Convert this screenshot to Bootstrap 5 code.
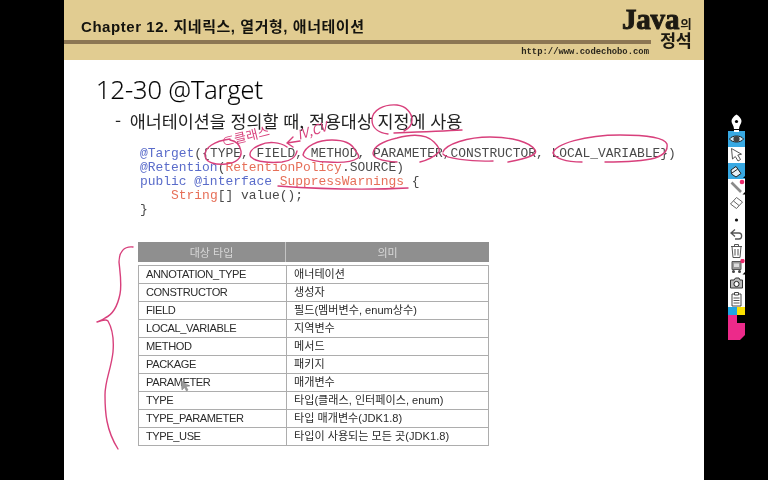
<!DOCTYPE html>
<html lang="ko">
<head>
<meta charset="utf-8">
<title>Chapter 12</title>
<link href="https://cdn.jsdelivr.net/npm/bootstrap@5.3.0/dist/css/bootstrap.min.css" rel="stylesheet">
<style>
html,body{margin:0;height:480px;overflow:hidden;background:#000}
.stage{height:480px;width:768px;background:#000}
.sheet{width:640px;height:480px;margin-left:64px;background:#fff;position:relative;flex:none;font-family:"Noto Sans CJK KR","Noto Sans",sans-serif;color:#1c1c1c;filter:blur(.35px)}
.headband{height:60px;background:#e1cc91}
.headleft{width:587px}
.chap{height:40px;padding-left:17px;padding-bottom:6px;font:700 15px/1 "Liberation Sans","Noto Sans CJK KR",sans-serif;letter-spacing:.55px;color:#14130e}
.rule{height:4px;background:#8c7653}
.site{font:700 8.9px/1 "Liberation Mono",monospace;color:#2a261c;padding-top:4px;padding-right:2px}
.logo{width:42px;color:#1d1a12;line-height:1}
.logojava{margin-left:-29px;margin-top:9px;white-space:nowrap;height:21px}
.javaword{font:700 29px/21px "Liberation Serif",serif;-webkit-text-stroke:1px #1d1a12;letter-spacing:-.2px}
.ui{font:700 12.5px/1 "Noto Sans CJK KR",sans-serif;margin-left:1px}
.jung{font:700 17.5px/1 "Noto Sans CJK KR",sans-serif;margin-top:1px;margin-left:9px;letter-spacing:-.3px;white-space:nowrap}
.heading{font:300 25.3px/34px "Open Sans","Noto Sans",sans-serif;margin:12px 0 0 32px;color:#000;-webkit-text-stroke:.2px #000}
.sub{font:400 17.4px/24px "Noto Sans CJK KR",sans-serif;margin:3px 0 0 51px;letter-spacing:-.03px;color:#222}
.codebox{font:400 12.95px/14px "Liberation Mono",monospace;margin:14px 0 0 76px;color:#4a4a4a;white-space:pre}
.kw{color:#5a6cca}
.ty{color:#e66f58}
.datawrap{width:351px;margin:25px 0 0 74px;font:400 11px/1 "Liberation Sans","Noto Sans CJK KR",sans-serif;color:#2b2b2b}
.dhead{height:20px;background:#8f8f8f;color:#d8d8d8;margin-bottom:3px;font-family:"Noto Sans CJK KR",sans-serif;font-size:11px}
.dhead>div{display:flex;align-items:center;justify-content:center}
.dh1{width:148px;border-right:1px solid #c4c4c4}
.dh2{flex:1}
.datatable{width:351px;table-layout:fixed;border-collapse:collapse;margin:0;border:1px solid #a8a8a8}
.datatable td{height:18px;padding:0 0 0 7px;border:1px solid #adadad;color:#2b2b2b;font-size:11.1px;line-height:1;background:#fff;vertical-align:middle}
.datatable td:first-child{width:148px;letter-spacing:-.42px}
.inkpad{position:absolute;left:-64px;top:0;width:768px;height:480px;pointer-events:none}
.inkpad text{fill:#d8407c;font-family:"Noto Sans CJK KR",sans-serif}
.toolwrap{position:absolute;left:728px;top:110px;width:17px;filter:blur(.3px)}
.penmark{height:21px;margin-left:-1px}
.toolstrip{background:#fff;width:17px}
.toolstrip svg{display:block}
.tool{height:16px}
.tool.on{background:#38a9e3}
.swatches{height:8px}
.sw1{width:9px;background:#1fa5e3}
.sw2{width:8px;background:#fae000}
.pinkbox{height:25px;background:#ec2a8a;position:relative}
.pinkbox::before{content:"";position:absolute;right:0;top:0;width:8px;height:8px;background:#000}
.pinkbox::after{content:"";position:absolute;right:0;bottom:0;border-left:5px solid transparent;border-bottom:5px solid #000}
</style>
</head>
<body>
<div class="stage d-flex">
  <div class="sheet">
    <div class="headband d-flex">
      <div class="headleft">
        <div class="chap d-flex align-items-end">Chapter 12. 지네릭스, 열거형, 애너테이션</div>
        <div class="rule"></div>
        <div class="site text-end">http://www.codechobo.com</div>
      </div>
      <div class="logo">
        <div class="logojava"><span class="javaword">Java</span><span class="ui">의</span></div>
        <div class="jung">정석</div>
      </div>
    </div>
    <div class="heading">12-30 @Target</div>
    <div class="sub"><span class="me-1">-</span> 애너테이션을 정의할 때, 적용대상 지정에 사용</div>
    <div class="codebox"><span class="kw">@Target</span>({TYPE, FIELD, METHOD, PARAMETER,CONSTRUCTOR, LOCAL_VARIABLE})
<span class="kw">@Retention</span>(<span class="ty">RetentionPolicy</span>.SOURCE)
<span class="kw">public @interface</span> <span class="ty">SuppressWarnings</span> {
    <span class="ty">String</span>[] value();
}
</div>
    <div class="datawrap">
      <div class="dhead d-flex"><div class="dh1">대상 타입</div><div class="dh2">의미</div></div>
      <table class="datatable">
        <tbody>
          <tr><td>ANNOTATION_TYPE</td><td>애너테이션</td></tr>
          <tr><td>CONSTRUCTOR</td><td>생성자</td></tr>
          <tr><td>FIELD</td><td>필드(멤버변수, enum상수)</td></tr>
          <tr><td>LOCAL_VARIABLE</td><td>지역변수</td></tr>
          <tr><td>METHOD</td><td>메서드</td></tr>
          <tr><td>PACKAGE</td><td>패키지</td></tr>
          <tr><td>PARAMETER</td><td>매개변수</td></tr>
          <tr><td>TYPE</td><td>타입(클래스, 인터페이스, enum)</td></tr>
          <tr><td>TYPE_PARAMETER</td><td>타입 매개변수(JDK1.8)</td></tr>
          <tr><td>TYPE_USE</td><td>타입이 사용되는 모든 곳(JDK1.8)</td></tr>
        </tbody>
      </table>
    </div>
    <svg class="inkpad" viewBox="0 0 768 480" fill="none" stroke="#d8407c" stroke-width="1.4" stroke-linecap="round" stroke-linejoin="round">
      <path d="M397 105C384 104 372 110 372 120C372 129 380 133 388 134M397 105C406 106 412 113 412 120C412 125 408 129 404 131"/>
      <path d="M394 133C420 132 445 131 462 130"/>
      <path d="M230 139C214 141 204 148 205 156C206 163 216 165 226 164C236 163 242 158 241 151C240 145 236 141 230 140"/>
      <path d="M287 147C280 142 268 141 260 145C252 148 248 153 251 157C256 162 270 163 282 162C290 161 296 157 297 151"/>
      <path d="M303 155C305 146 318 140 332 140C344 140 352 144 355 150C358 154 360 156 358 158C352 162 340 163 328 162C318 162 306 160 303 155Z"/>
      <path d="M373 153C374 146 384 141 397 138C412 134 426 134 434 142C438 146 440 150 439 152C434 157 428 160 420 162M373 153C373 157 378 161 397 162"/>
      <path d="M443 152C446 144 468 137 490 137C512 137 530 142 535 150C538 154 530 158 508 162M443 154C445 158 470 162 493 161"/>
      <path d="M553 153C555 144 585 135 620 135C645 135 664 137 667 144C668 150 664 155 655 158C640 162 622 162 605 162M553 153C555 158 565 162 582 162"/>
      <path d="M278 186C320 189 370 190 408 188"/>
      <path d="M133 247C124 246 119 252 119 262C120 272 122 284 120 294C118 304 114 314 105 318C102 320 99 321 97 322C103 320 106 319 108 321C112 328 114 340 113 352C111 370 105 380 105 395C105 412 106 430 118 449"/>
      <path d="M287 143L293 137M287 143L293 147M287 143L300 141"/>
      <text x="0" y="0" transform="translate(223 147) rotate(-14)" font-size="13" stroke="none">⊂클래스</text>
      <text x="0" y="0" transform="translate(299 140) rotate(-18)" font-size="13" stroke="none" font-style="italic">IV,CV</text>
      <path d="M181 381l1 9 2.500-2.500 2 3.500 1.500-1-2-3.500 3.200-.5z" fill="#9a9a9a" stroke="#888" stroke-width=".6"/>
    </svg>
  </div>
  <div class="toolwrap">
    <div class="penmark">
      <svg width="19" height="21" viewBox="0 0 19 21"><path d="M9.500 1.500C12 3 14.500 5.500 14.500 8C14.500 11 12 12.500 12 16H7C7 12.500 4.500 11 4.500 8C4.500 5.500 7 3 9.500 1.500Z" fill="#fff"/><circle cx="9.500" cy="8.500" r="1.600" fill="#000"/><rect x="7" y="17" width="5" height="2" fill="#fff"/></svg>
    </div>
    <div class="toolstrip">
      <div class="tool on"><svg width="17" height="16" viewBox="0 0 17 16"><path d="M1.500 8C4 4 13 4 15.500 8C13 12 4 12 1.500 8Z" fill="#cfe8f5" stroke="#222"/><circle cx="8.500" cy="8" r="3.100" fill="#444"/></svg></div>
      <div class="tool"><svg width="17" height="15" viewBox="0 0 17 15"><path d="M3.500 1.500L4.500 12L7.300 9.500L10 14L12.500 12.500L9.800 8L13.500 7.200Z" fill="#fff" stroke="#555" stroke-width="1"/></svg></div>
      <div class="tool on"><svg width="17" height="16" viewBox="0 0 17 16"><path d="M3 7L8 3.500L13 10.500L8 14L3.500 11Z" fill="#e8f1f7" stroke="#222"/><path d="M4 10L9.500 6.200" stroke="#222"/><path d="M15 15l2-2v2z" fill="#000"/></svg></div>
      <div class="tool"><svg width="17" height="16" viewBox="0 0 17 16"><path d="M3.500 3.500L13 13" stroke="#8a8a8a" stroke-width="2.600"/><circle cx="14" cy="3" r="2.300" fill="#ec2a6c"/><path d="M14.500 15.500l2.500-2.500v2.500z" fill="#000"/></svg></div>
      <div class="tool"><svg width="17" height="15" viewBox="0 0 17 15"><path d="M2.500 9L8.500 2.500L14.500 7L8.500 13.500Z" fill="#fff" stroke="#666"/><path d="M5.500 6L11 10.500" stroke="#666"/></svg></div>
      <div class="tool"><svg width="17" height="24" viewBox="0 0 17 24"><circle cx="8.500" cy="9" r="1.600" fill="#111"/></svg></div>
      <div class="tool"><svg width="17" height="15" viewBox="0 0 17 15"><path d="M7 2.500L3 6L7 9.500M3 6H11C14.500 6 14.500 12 11 12H7" stroke="#555" stroke-width="1.300" fill="none"/></svg></div>
      <div class="tool"><svg width="17" height="16" viewBox="0 0 17 16"><path d="M3 3.500H14M6.500 3.500V1.500H10.500V3.500M4 3.500L5 14.500H12L13 3.500M7 6V12.500M10 6V12.500" stroke="#555" fill="none"/></svg></div>
      <div class="tool"><svg width="17" height="16" viewBox="0 0 17 16"><path d="M4 2.500H13V10.500H4Z" fill="#999" stroke="#555"/><path d="M6 4.500H11V8H6Z" fill="#ddd"/><circle cx="5.500" cy="12.500" r="1.500" fill="#444"/><circle cx="11.500" cy="12.500" r="1.500" fill="#444"/><circle cx="14.500" cy="2" r="2.200" fill="#ec2a6c"/><path d="M14.500 15.500l2.500-2.500v2.500z" fill="#000"/></svg></div>
      <div class="tool"><svg width="17" height="16" viewBox="0 0 17 16"><path d="M2.500 5H6L7.500 3H11L12 5H14.500V13H2.500Z" fill="#bbb" stroke="#333"/><circle cx="8.500" cy="9" r="2.600" fill="#fff" stroke="#222"/></svg></div>
      <div class="tool"><svg width="17" height="16" viewBox="0 0 17 16"><path d="M4 3H13V15H4Z" fill="#fff" stroke="#444"/><path d="M6.500 1.500H10.500V4H6.500Z" fill="#fff" stroke="#444"/><path d="M5.500 7H11.500M5.500 9.500H11.500M5.500 12H11.500" stroke="#555"/></svg></div>
      <div class="swatches d-flex"><div class="sw1"></div><div class="sw2"></div></div>
      <div class="pinkbox"></div>
    </div>
  </div>
</div>
<script src="https://cdn.jsdelivr.net/npm/bootstrap@5.3.0/dist/js/bootstrap.bundle.min.js"></script>
</body>
</html>
